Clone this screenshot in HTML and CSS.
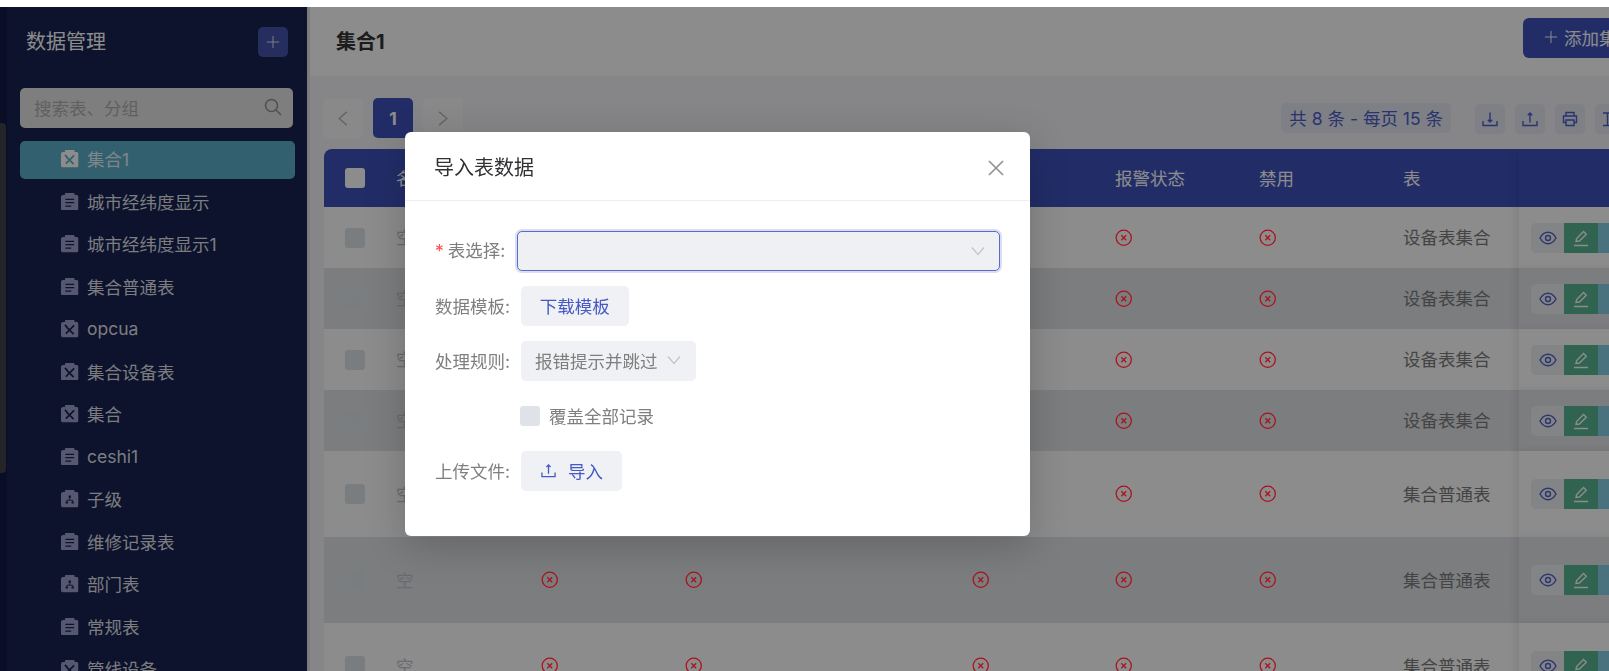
FILE: index.html
```html
<!DOCTYPE html>
<html lang="zh-CN">
<head>
    <meta charset="UTF-8">
    <title>数据管理</title>
    <link rel="stylesheet" href="styles.css">
</head>
<body>
    <svg class="icon-defs" aria-hidden="true">
        <symbol id="clip-doc" viewBox="0 0 18 18">
            <path fill="currentColor" d="M5 0h8a1 1 0 0 1 1 1v1h2a2 2 0 0 1 2 2v12a2 2 0 0 1-2 2H2a2 2 0 0 1-2-2V4a2 2 0 0 1 2-2h2V1a1 1 0 0 1 1-1z"/>
            <path class="glyph" d="M4.500 6.500h9M4.500 10h9M4.500 13.500h6"/>
        </symbol>
        <symbol id="clip-tool" viewBox="0 0 18 18">
            <path fill="currentColor" d="M5 0h8a1 1 0 0 1 1 1v1h2a2 2 0 0 1 2 2v12a2 2 0 0 1-2 2H2a2 2 0 0 1-2-2V4a2 2 0 0 1 2-2h2V1a1 1 0 0 1 1-1z"/>
            <path class="glyph tool" d="M5.500 7l7.500 7.500M13.500 5.500L5 14M4 5l2.500 2.500"/>
        </symbol>
        <symbol id="clip-tree" viewBox="0 0 18 18">
            <path fill="currentColor" d="M5 0h8a1 1 0 0 1 1 1v1h2a2 2 0 0 1 2 2v12a2 2 0 0 1-2 2H2a2 2 0 0 1-2-2V4a2 2 0 0 1 2-2h2V1a1 1 0 0 1 1-1z"/>
            <path class="glyph thin" d="M9 7.500v3M6 12v-1.500h6V12"/>
            <path class="glyph thick" d="M7.800 6.800h2.400M4.800 12.800h2.400M10.800 12.800h2.400"/>
        </symbol>
        <symbol id="plus" viewBox="0 0 16 16">
            <path d="M8 1v14M1 8h14"/>
        </symbol>
        <symbol id="chevron" viewBox="0 0 14 10">
            <path d="M1 1.500l6 7 6-7"/>
        </symbol>
        <symbol id="upload" viewBox="0 0 16 16">
            <path d="M1 10v4.500h14V10M8 11.500V2M5.800 4.200L8 2l2.200 2.200"/>
        </symbol>
        <symbol id="download" viewBox="0 0 16 16">
            <path d="M1 10v4.500h14V10M8 1.500V11M5.800 8.800L8 11l2.200-2.200"/>
        </symbol>
        <symbol id="printer" viewBox="0 0 16 16">
            <path d="M4 5V1.500h8V5M4 11.500H1.500V5h13v6.500H12M4 9h8v5.500H4z"/>
        </symbol>
        <symbol id="columns" viewBox="0 0 16 16">
            <path d="M1 2h14M5.500 2v12.500M1 14.500h14"/>
        </symbol>
        <symbol id="eye" viewBox="0 0 18 14">
            <path d="M1 7c2-3.800 4.800-5.700 8-5.700s6 1.900 8 5.700c-2 3.800-4.800 5.700-8 5.700S3 10.800 1 7z"/>
            <circle cx="9" cy="7" r="2.500"/>
        </symbol>
        <symbol id="pen" viewBox="0 0 18 18">
            <path d="M2 16.500h14M4 12.500l.6-3L11.500 2.500l2.800 2.800-6.900 6.700z"/>
        </symbol>
        <symbol id="cross-circle" viewBox="0 0 18 18">
            <circle cx="9" cy="9" r="7.800"/>
            <path d="M6.500 6.500l5 5M11.500 6.500l-5 5"/>
        </symbol>
    </svg>

    <div class="top-strip"></div>

    <div class="layout">
        <div class="edge"><div class="edge-thumb"></div></div>

        <aside class="sidebar">
            <div class="side-head">
                <span class="side-title">数据管理</span>
                <span class="side-add"><svg class="ico-13"><use href="#plus"/></svg></span>
            </div>
            <div class="search">
                <span>搜索表、分组</span>
                <svg class="search-icon" viewBox="0 0 18 18"><circle cx="7.500" cy="7.500" r="6"/><path d="M12 12l5 5"/></svg>
            </div>
            <ul class="nav">
                <li class="nav-item active"><svg class="nav-icon"><use href="#clip-tool"/></svg>集合1</li>
                <li class="nav-item"><svg class="nav-icon"><use href="#clip-doc"/></svg>城市经纬度显示</li>
                <li class="nav-item"><svg class="nav-icon"><use href="#clip-doc"/></svg>城市经纬度显示1</li>
                <li class="nav-item"><svg class="nav-icon"><use href="#clip-doc"/></svg>集合普通表</li>
                <li class="nav-item"><svg class="nav-icon"><use href="#clip-tool"/></svg>opcua</li>
                <li class="nav-item"><svg class="nav-icon"><use href="#clip-tool"/></svg>集合设备表</li>
                <li class="nav-item"><svg class="nav-icon"><use href="#clip-tool"/></svg>集合</li>
                <li class="nav-item"><svg class="nav-icon"><use href="#clip-doc"/></svg>ceshi1</li>
                <li class="nav-item"><svg class="nav-icon"><use href="#clip-tree"/></svg>子级</li>
                <li class="nav-item"><svg class="nav-icon"><use href="#clip-doc"/></svg>维修记录表</li>
                <li class="nav-item"><svg class="nav-icon"><use href="#clip-tree"/></svg>部门表</li>
                <li class="nav-item"><svg class="nav-icon"><use href="#clip-doc"/></svg>常规表</li>
                <li class="nav-item"><svg class="nav-icon"><use href="#clip-tool"/></svg>管线设备</li>
            </ul>
        </aside>

        <div class="splitter"></div>

        <main class="main">
            <header class="main-head">
                <span class="main-title">集合1</span>
                <span class="add-btn"><svg class="ico-13"><use href="#plus"/></svg>添加集合</span>
            </header>

            <div class="toolbar">
                <div class="pager">
                    <span class="page-btn"><svg class="pager-arrow left"><use href="#chevron"/></svg></span>
                    <span class="page-btn current">1</span>
                    <span class="page-btn"><svg class="pager-arrow right"><use href="#chevron"/></svg></span>
                </div>
                <div class="tools">
                    <span class="count">共 8 条 - 每页 15 条</span>
                    <span class="tool-btn"><svg class="ico-16"><use href="#download"/></svg></span>
                    <span class="tool-btn"><svg class="ico-16"><use href="#upload"/></svg></span>
                    <span class="tool-btn"><svg class="ico-16"><use href="#printer"/></svg></span>
                    <span class="tool-btn"><svg class="ico-16"><use href="#columns"/></svg></span>
                </div>
            </div>

            <div class="table">
                <div class="row head">
                    <div class="cell"><span class="check"></span></div>
                    <div class="cell">名称</div>
                    <div class="cell"></div>
                    <div class="cell"></div>
                    <div class="cell"></div>
                    <div class="cell">报警状态</div>
                    <div class="cell">禁用</div>
                    <div class="cell">表</div>
                    <div class="cell fixed"></div>
                </div>
                <div class="row">
                    <div class="cell"><span class="check"></span></div>
                    <div class="cell empty">空</div>
                    <div class="cell"><svg class="cross"><use href="#cross-circle"/></svg></div>
                    <div class="cell"><svg class="cross"><use href="#cross-circle"/></svg></div>
                    <div class="cell"><svg class="cross"><use href="#cross-circle"/></svg></div>
                    <div class="cell"><svg class="cross"><use href="#cross-circle"/></svg></div>
                    <div class="cell"><svg class="cross"><use href="#cross-circle"/></svg></div>
                    <div class="cell">设备表集合</div>
                    <div class="cell fixed"><div class="actions"><span class="act view"><svg class="ico-18"><use href="#eye"/></svg></span><span class="act edit"><svg class="ico-18"><use href="#pen"/></svg></span><span class="act more"></span></div></div>
                </div>
                <div class="row alt">
                    <div class="cell"><span class="check"></span></div>
                    <div class="cell empty">空</div>
                    <div class="cell"><svg class="cross"><use href="#cross-circle"/></svg></div>
                    <div class="cell"><svg class="cross"><use href="#cross-circle"/></svg></div>
                    <div class="cell"><svg class="cross"><use href="#cross-circle"/></svg></div>
                    <div class="cell"><svg class="cross"><use href="#cross-circle"/></svg></div>
                    <div class="cell"><svg class="cross"><use href="#cross-circle"/></svg></div>
                    <div class="cell">设备表集合</div>
                    <div class="cell fixed"><div class="actions"><span class="act view"><svg class="ico-18"><use href="#eye"/></svg></span><span class="act edit"><svg class="ico-18"><use href="#pen"/></svg></span><span class="act more"></span></div></div>
                </div>
                <div class="row">
                    <div class="cell"><span class="check"></span></div>
                    <div class="cell empty">空</div>
                    <div class="cell"><svg class="cross"><use href="#cross-circle"/></svg></div>
                    <div class="cell"><svg class="cross"><use href="#cross-circle"/></svg></div>
                    <div class="cell"><svg class="cross"><use href="#cross-circle"/></svg></div>
                    <div class="cell"><svg class="cross"><use href="#cross-circle"/></svg></div>
                    <div class="cell"><svg class="cross"><use href="#cross-circle"/></svg></div>
                    <div class="cell">设备表集合</div>
                    <div class="cell fixed"><div class="actions"><span class="act view"><svg class="ico-18"><use href="#eye"/></svg></span><span class="act edit"><svg class="ico-18"><use href="#pen"/></svg></span><span class="act more"></span></div></div>
                </div>
                <div class="row alt">
                    <div class="cell"><span class="check"></span></div>
                    <div class="cell empty">空</div>
                    <div class="cell"><svg class="cross"><use href="#cross-circle"/></svg></div>
                    <div class="cell"><svg class="cross"><use href="#cross-circle"/></svg></div>
                    <div class="cell"><svg class="cross"><use href="#cross-circle"/></svg></div>
                    <div class="cell"><svg class="cross"><use href="#cross-circle"/></svg></div>
                    <div class="cell"><svg class="cross"><use href="#cross-circle"/></svg></div>
                    <div class="cell">设备表集合</div>
                    <div class="cell fixed"><div class="actions"><span class="act view"><svg class="ico-18"><use href="#eye"/></svg></span><span class="act edit"><svg class="ico-18"><use href="#pen"/></svg></span><span class="act more"></span></div></div>
                </div>
                <div class="row tall">
                    <div class="cell"><span class="check"></span></div>
                    <div class="cell empty">空</div>
                    <div class="cell"><svg class="cross"><use href="#cross-circle"/></svg></div>
                    <div class="cell"><svg class="cross"><use href="#cross-circle"/></svg></div>
                    <div class="cell"><svg class="cross"><use href="#cross-circle"/></svg></div>
                    <div class="cell"><svg class="cross"><use href="#cross-circle"/></svg></div>
                    <div class="cell"><svg class="cross"><use href="#cross-circle"/></svg></div>
                    <div class="cell">集合普通表</div>
                    <div class="cell fixed"><div class="actions"><span class="act view"><svg class="ico-18"><use href="#eye"/></svg></span><span class="act edit"><svg class="ico-18"><use href="#pen"/></svg></span><span class="act more"></span></div></div>
                </div>
                <div class="row tall alt">
                    <div class="cell"><span class="check"></span></div>
                    <div class="cell empty">空</div>
                    <div class="cell"><svg class="cross"><use href="#cross-circle"/></svg></div>
                    <div class="cell"><svg class="cross"><use href="#cross-circle"/></svg></div>
                    <div class="cell"><svg class="cross"><use href="#cross-circle"/></svg></div>
                    <div class="cell"><svg class="cross"><use href="#cross-circle"/></svg></div>
                    <div class="cell"><svg class="cross"><use href="#cross-circle"/></svg></div>
                    <div class="cell">集合普通表</div>
                    <div class="cell fixed"><div class="actions"><span class="act view"><svg class="ico-18"><use href="#eye"/></svg></span><span class="act edit"><svg class="ico-18"><use href="#pen"/></svg></span><span class="act more"></span></div></div>
                </div>
                <div class="row tall">
                    <div class="cell"><span class="check"></span></div>
                    <div class="cell empty">空</div>
                    <div class="cell"><svg class="cross"><use href="#cross-circle"/></svg></div>
                    <div class="cell"><svg class="cross"><use href="#cross-circle"/></svg></div>
                    <div class="cell"><svg class="cross"><use href="#cross-circle"/></svg></div>
                    <div class="cell"><svg class="cross"><use href="#cross-circle"/></svg></div>
                    <div class="cell"><svg class="cross"><use href="#cross-circle"/></svg></div>
                    <div class="cell">集合普通表</div>
                    <div class="cell fixed"><div class="actions"><span class="act view"><svg class="ico-18"><use href="#eye"/></svg></span><span class="act edit"><svg class="ico-18"><use href="#pen"/></svg></span><span class="act more"></span></div></div>
                </div>
            </div>
        </main>
    </div>

    <div class="mask"></div>

    <div class="modal">
        <div class="modal-head">
            <span class="modal-title">导入表数据</span>
            <svg class="modal-close" viewBox="0 0 16 16"><path d="M1 1l14 14M15 1L1 15"/></svg>
        </div>
        <div class="modal-body">
            <div class="form-row">
                <label class="form-label short"><span class="star">*</span>表选择:</label>
                <div class="select-box"><svg class="select-arrow"><use href="#chevron"/></svg></div>
            </div>
            <div class="form-row">
                <label class="form-label">数据模板:</label>
                <span class="btn">下载模板</span>
            </div>
            <div class="form-row">
                <label class="form-label">处理规则:</label>
                <div class="rule-select">报错提示并跳过<svg class="select-arrow"><use href="#chevron"/></svg></div>
            </div>
            <div class="form-row">
                <span class="form-label"></span>
                <span class="modal-check"></span>
                <span class="check-text">覆盖全部记录</span>
            </div>
            <div class="form-row">
                <label class="form-label">上传文件:</label>
                <span class="btn import"><svg class="ico-15"><use href="#upload"/></svg>导入</span>
            </div>
        </div>
    </div>
</body>
</html>
```

FILE: styles.css
```css
* {
    box-sizing: border-box;
}

body {
    margin: 0;
    height: 671px;
    overflow: hidden;
    background-color: #ffffff;
    font-family: Inter, "Noto Sans CJK SC", sans-serif;
    font-size: 17.5px;
}

.icon-defs {
    display: none;
}

.top-strip {
    height: 7px;
    background-color: #ffffff;
}

.layout {
    display: flex;
    height: 664px;
    overflow: hidden;
}

/* left edge of the outer frame */
.edge {
    flex: 0 0 7px;
    padding-top: 116px;
    background-color: #121a45;
}

.edge-thumb {
    width: 6px;
    height: 350px;
    border-radius: 0 4px 4px 0;
    background-color: #40444f;
}

/* sidebar */
.sidebar {
    flex: 0 0 300px;
    padding: 0 12px 0 13px;
    overflow: hidden;
    background-color: #182252;
}

.side-head {
    display: flex;
    justify-content: space-between;
    align-items: center;
    padding: 20px 7px 0 6px;
    margin-bottom: 31px;
}

.side-title {
    font-size: 20px;
    line-height: 30px;
    color: #ffffff;
}

.side-add {
    display: flex;
    justify-content: center;
    align-items: center;
    width: 30px;
    height: 30px;
    border-radius: 5px;
    color: #e8e8e8;
    background-color: #4655ae;
}

.search {
    display: flex;
    justify-content: space-between;
    align-items: center;
    height: 40px;
    margin: 0 2px 13px 0;
    padding: 0 11px 2px 14px;
    border-radius: 5px;
    color: #b0b0b0;
    background-color: #e5e5e5;
}

.search-icon {
    width: 18px;
    height: 18px;
    fill: none;
    stroke: #929292;
    stroke-width: 1.6;
}

.nav {
    list-style: none;
    margin: 0;
    padding: 0;
}

.nav-item {
    display: flex;
    align-items: center;
    height: 37.5px;
    margin-bottom: 5px;
    padding: 0 0 2px 41px;
    border-radius: 5px;
    color: rgba(255, 255, 255, 0.88);
    --glyph: #182252;
}

.nav-item.active {
    --glyph: #5db0ca;
    background-color: #5db0ca;
}

.nav-icon {
    flex: none;
    width: 17.5px;
    height: 17.5px;
    margin-right: 8.5px;
    color: #9ba0cc;
}

.active .nav-icon {
    color: #ffffff;
}

.glyph {
    fill: none;
    stroke: var(--glyph);
    stroke-width: 1.3;
}

.glyph.tool {
    stroke-width: 1.7;
}

.glyph.thin {
    stroke-width: 0.9;
}

.glyph.thick {
    stroke-width: 2.2;
}

/* shared stroke icons */
.ico-18,
.ico-16,
.ico-15,
.ico-13 {
    flex: none;
    fill: none;
    stroke: currentColor;
    stroke-width: 1.4;
}

.ico-18 {
    width: 18px;
    height: 18px;
}

.ico-16 {
    width: 16px;
    height: 16px;
}

.ico-15 {
    width: 15px;
    height: 15px;
}

.ico-13 {
    width: 14px;
    height: 14px;
    stroke-width: 1.1;
}

.splitter {
    flex: 0 0 3px;
    background-color: #e2e2e2;
}

/* main */
.main {
    flex: 0 0 1345px;
    background-color: #f4f5f7;
}

.main-head {
    display: flex;
    justify-content: space-between;
    align-items: flex-start;
    height: 69px;
    padding: 11px 0 0 26px;
    background-color: #ffffff;
}

.main-title {
    font-size: 20px;
    font-weight: 700;
    line-height: 48px;
    color: #333333;
}

.add-btn {
    display: flex;
    align-items: center;
    gap: 6px;
    width: 132px;
    height: 40px;
    padding: 0 0 2px 21px;
    border-radius: 6px;
    white-space: nowrap;
    color: #ffffff;
    background-color: #3e52bd;
}

.toolbar {
    display: flex;
    justify-content: space-between;
    align-items: center;
    height: 62px;
    padding: 22px 30px 0 13px;
}

.pager {
    display: flex;
    gap: 10px;
}

.page-btn {
    display: flex;
    justify-content: center;
    align-items: center;
    width: 40px;
    height: 40px;
    border-radius: 5px;
    background-color: #fafafa;
}

.page-btn.current {
    font-weight: 700;
    color: #ffffff;
    background-color: #3e52bd;
}

.pager-arrow {
    width: 16px;
    height: 11px;
    fill: none;
    stroke: #b9b9b9;
    stroke-width: 1.3;
}

.pager-arrow.left {
    transform: rotate(90deg);
}

.pager-arrow.right {
    transform: rotate(-90deg);
}

.tools {
    display: flex;
    align-items: center;
    gap: 10px;
}

.count {
    display: flex;
    align-items: center;
    height: 30px;
    margin-right: 14px;
    padding: 0 8px 2px;
    border-radius: 5px;
    white-space: nowrap;
    color: #4c5fc9;
    background-color: #e7e9f2;
}

.tool-btn {
    display: flex;
    justify-content: center;
    align-items: center;
    width: 30px;
    height: 30px;
    margin-top: 2px;
    border-radius: 5px;
    color: #4c5fc9;
    background-color: #e7e9f2;
}

/* table */
.table {
    width: 1301px;
    margin: 11px 0 0 14px;
    border-radius: 8px 0 0 0;
    overflow: hidden;
}

.row {
    display: grid;
    grid-template-columns: 61px 145px 144px 287px 143px 144px 144px 127px 106px;
    height: 61px;
    color: #7c7c7c;
    background-color: #ffffff;
}

.row.alt {
    background-color: #e2e3e8;
}

.row.tall {
    height: 86px;
}

.row.head {
    height: 58px;
    color: #ffffff;
    background-color: #3e52bd;
}

.cell {
    display: flex;
    align-items: center;
    padding: 0 0 2px 11px;
    white-space: nowrap;
}

.cell:first-child {
    padding-left: 21px;
}

.cell.empty {
    color: #c0c4cc;
}

.cell.fixed {
    padding-left: 12px;
    background-color: inherit;
    box-shadow: -4px 0 8px rgba(0, 0, 0, 0.08);
}

.check {
    width: 20px;
    height: 20px;
    margin-top: 2px;
    border-radius: 3px;
    background-color: #dfe3e8;
}

.head .check {
    background-color: #ffffff;
}

.cross {
    position: relative;
    z-index: 101;
    width: 17.5px;
    height: 17.5px;
    margin-top: 2px;
    fill: none;
    stroke: #aa121c;
    stroke-width: 1.3;
}

.actions {
    display: flex;
    height: 30px;
    margin-top: 2px;
    border-radius: 5px 0 0 5px;
    overflow: hidden;
}

.act {
    display: flex;
    flex: none;
    justify-content: center;
    align-items: center;
    width: 34px;
}

.act.view {
    width: 33px;
    color: #5064cc;
    background-color: #eff0f3;
}

.act.edit {
    color: #ffffff;
    background-color: #58b592;
}

.act.more {
    background-color: #85d0e5;
}

/* dialog */
.mask {
    position: fixed;
    top: 7px;
    left: 0;
    right: 0;
    bottom: 0;
    z-index: 100;
    background-color: rgba(0, 0, 0, 0.45);
}

.modal {
    position: fixed;
    top: 132px;
    left: 405px;
    z-index: 102;
    width: 625px;
    height: 404px;
    border-radius: 6px;
    background-color: #ffffff;
    box-shadow: 0 10px 40px rgba(0, 0, 0, 0.2);
}

.modal-head {
    display: flex;
    justify-content: space-between;
    align-items: center;
    height: 69px;
    padding: 0 26px 0 29px;
    border-bottom: 1px solid #eceef1;
}

.modal-title {
    font-size: 20px;
    color: #303133;
}

.modal-close {
    width: 16px;
    height: 16px;
    margin-top: 4px;
    fill: none;
    stroke: #8f8f8f;
    stroke-width: 1.6;
}

.modal-body {
    display: flex;
    flex-direction: column;
    gap: 15px;
    padding: 30px 30px 0;
}

.form-row {
    display: flex;
    align-items: center;
    height: 40px;
}

.form-label {
    flex: 0 0 86px;
    padding-bottom: 2px;
    color: #7f7f7f;
}

.form-label.short {
    flex-basis: 82px;
    padding-bottom: 3px;
}

.star {
    margin-right: 4px;
    color: #ff4d4f;
}

.select-box {
    display: flex;
    flex: 1;
    justify-content: flex-end;
    align-items: center;
    height: 40px;
    padding-right: 14px;
    border: 1px solid #5c6bc8;
    border-radius: 5px;
    background-color: #eff0f3;
    box-shadow: 0 0 0 2px #dadef4;
}

.select-arrow {
    width: 14px;
    height: 10px;
    fill: none;
    stroke: #c0c4cc;
    stroke-width: 1.2;
}

.btn {
    display: flex;
    align-items: center;
    height: 40px;
    padding: 0 18.75px 2px;
    border-radius: 5px;
    color: #4659c4;
    background-color: #f0f1f4;
}

.btn.import {
    gap: 12px;
    padding-left: 20px;
}

.rule-select {
    display: flex;
    align-items: center;
    gap: 9px;
    width: 175px;
    height: 40px;
    padding: 0 0 2px 14px;
    border-radius: 5px;
    white-space: nowrap;
    color: #7f7f7f;
    background-color: #f0f1f4;
}

.modal-check {
    width: 20px;
    height: 20px;
    margin: 0 9px 0 -1px;
    border-radius: 3px;
    background-color: #dfe3e8;
}

.check-text {
    padding-bottom: 2px;
    color: #7f7f7f;
}
```
